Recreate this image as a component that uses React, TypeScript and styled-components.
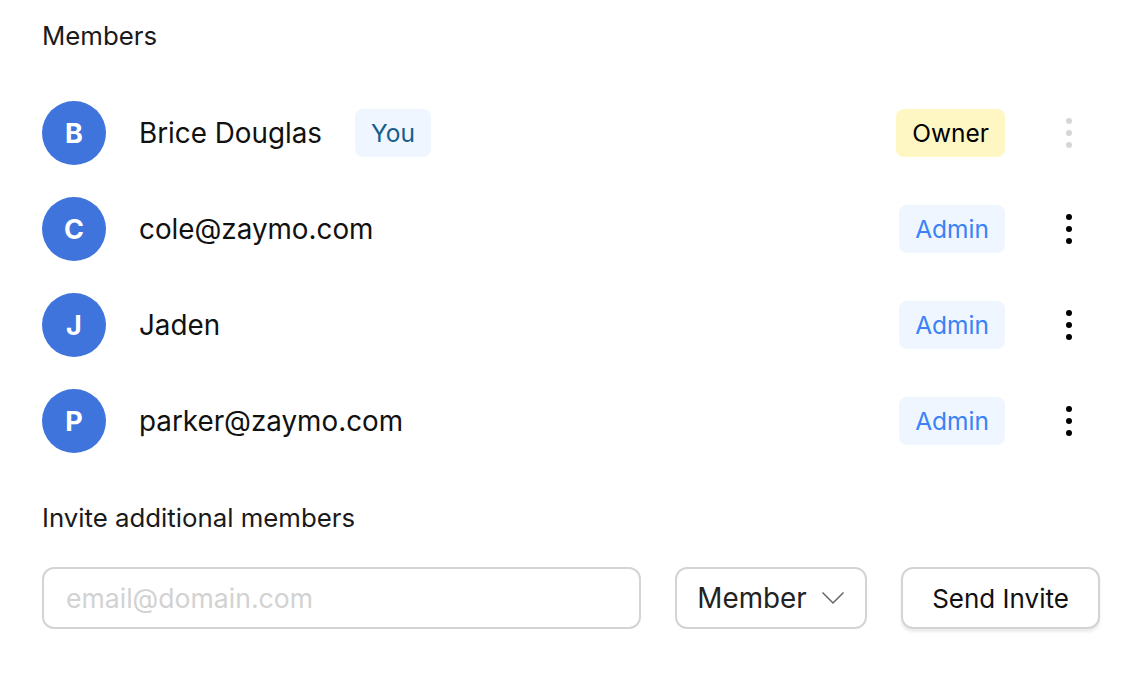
import React from "react";
import styled, { createGlobalStyle } from "styled-components";

const Global = createGlobalStyle`
  html, body { margin: 0; padding: 0; background: #ffffff; }
  body { font-family: Inter, "Noto Sans", sans-serif; color: #111111; -webkit-font-smoothing: antialiased; }
  * { box-sizing: border-box; }
`;

const Page = styled.div`
  width: 1140px;
  height: 674px;
  padding: 21px 40px 0 42px;
  display: flex;
  flex-direction: column;
`;

const Heading = styled.div`
  font-size: 25.8px;
  line-height: 30px;
  color: #1a1a1a;
`;

const List = styled.div`
  margin: 34px 0;
  display: flex;
  flex-direction: column;
`;

const Row = styled.div`
  height: 96px;
  display: flex;
  align-items: center;
`;

const Avatar = styled.div`
  width: 64px;
  height: 64px;
  border-radius: 50%;
  background: #3f74dd;
  color: #ffffff;
  font-weight: 700;
  font-size: 27px;
  display: flex;
  align-items: center;
  justify-content: center;
  flex-shrink: 0;
`;

const Name = styled.div`
  margin-left: 33px;
  font-size: 27.8px;
  color: #111111;
`;

const Pill = styled.div<{ $tone: "you" | "owner" | "admin" }>`
  height: 48px;
  padding: 0 16px;
  border-radius: 8px;
  display: flex;
  align-items: center;
  font-size: 24.5px;
  font-weight: 400;
  background: ${(p) => (p.$tone === "owner" ? "#fef7c3" : "#eff6ff")};
  color: ${(p) =>
    p.$tone === "owner" ? "#000000" : p.$tone === "you" ? "#155e8a" : "#3b82f6"};
`;

const YouPill = styled(Pill)`
  margin-left: 33px;
`;

const Spacer = styled.div`
  flex: 1;
`;

const Kebab = styled.button<{ $muted?: boolean }>`
  width: 64px;
  height: 48px;
  margin-left: 32px;
  margin-right: -1px;
  border: none;
  background: transparent;
  padding: 0;
  display: flex;
  flex-direction: column;
  align-items: center;
  justify-content: center;
  gap: 6px;
  cursor: pointer;
  span {
    width: 6px;
    height: 6px;
    border-radius: 50%;
    background: ${(p) => (p.$muted ? "#d6d6d6" : "#000000")};
  }
`;

const InviteRow = styled.div`
  margin-top: 34px;
  display: flex;
  gap: 34px;
`;

const EmailInput = styled.input`
  flex: 1;
  height: 62px;
  border: 2px solid #d4d4d4;
  border-radius: 12px;
  padding: 0 22px;
  font-family: Inter, "Noto Sans", sans-serif;
  font-size: 26.6px;
  color: #111111;
  outline: none;
  &::placeholder { color: #d2d2d2; }
`;

const Select = styled.button`
  width: 192px;
  height: 62px;
  border: 2px solid #d4d4d4;
  border-radius: 12px;
  background: #ffffff;
  display: flex;
  align-items: center;
  justify-content: center;
  gap: 14px;
  font-family: Inter, "Noto Sans", sans-serif;
  font-size: 27.8px;
  color: #222222;
  padding: 0;
`;

const SendButton = styled.button`
  width: 199px;
  height: 62px;
  border: 2px solid #d4d4d4;
  border-radius: 12px;
  background: #ffffff;
  box-shadow: 0 3px 3px rgba(0, 0, 0, 0.08);
  font-family: Inter, "Noto Sans", sans-serif;
  font-size: 26px;
  color: #111111;
  padding: 0;
`;

type Member = { initial: string; name: string; role: "Owner" | "Admin"; you?: boolean };

const members: Member[] = [
  { initial: "B", name: "Brice Douglas", role: "Owner", you: true },
  { initial: "C", name: "cole@zaymo.com", role: "Admin" },
  { initial: "J", name: "Jaden", role: "Admin" },
  { initial: "P", name: "parker@zaymo.com", role: "Admin" },
];

export default function App() {
  return (
    <>
      <Global />
      <Page>
        <Heading>Members</Heading>
        <List>
          {members.map((m) => (
            <Row key={m.name}>
              <Avatar>{m.initial}</Avatar>
              <Name>{m.name}</Name>
              {m.you && <YouPill $tone="you">You</YouPill>}
              <Spacer />
              <Pill $tone={m.role === "Owner" ? "owner" : "admin"}>{m.role}</Pill>
              <Kebab $muted={m.role === "Owner"} aria-label="More">
                <span />
                <span />
                <span />
              </Kebab>
            </Row>
          ))}
        </List>
        <Heading>Invite additional members</Heading>
        <InviteRow>
          <EmailInput placeholder="email@domain.com" />
          <Select>
            Member
            <svg width="24" height="14" viewBox="0 0 24 14" fill="none">
              <path d="M1.5 1.5 L12 12 L22.5 1.5" stroke="#666" strokeWidth="1.5" />
            </svg>
          </Select>
          <SendButton>Send Invite</SendButton>
        </InviteRow>
      </Page>
    </>
  );
}
